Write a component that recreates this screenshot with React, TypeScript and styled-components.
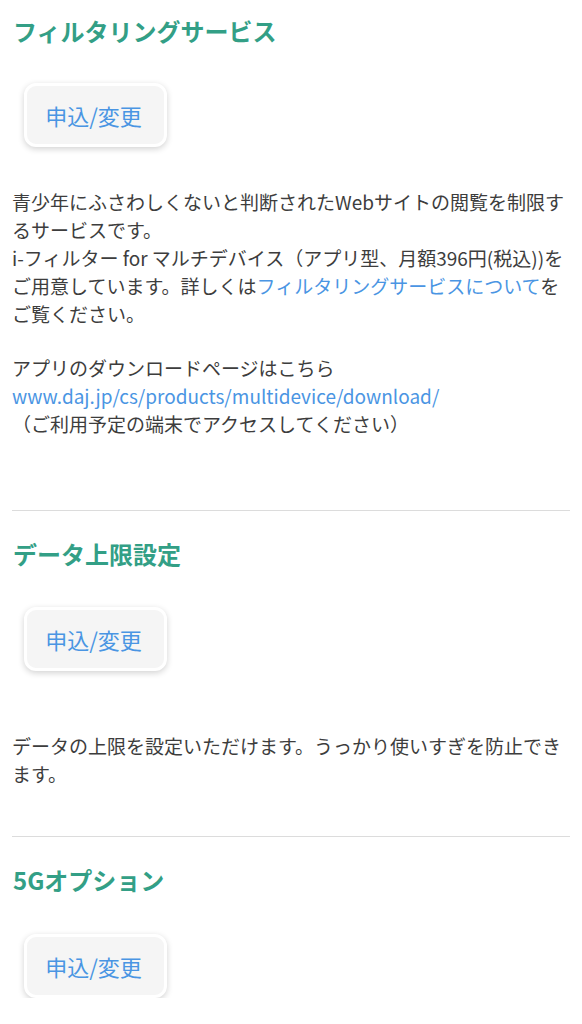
import styled, { createGlobalStyle } from 'styled-components'

const GlobalStyle = createGlobalStyle`
  html, body {
    margin: 0;
    padding: 0;
    background: #ffffff;
  }
  body {
    font-family: "Noto Sans CJK JP", "Noto Sans", sans-serif;
    color: #3a3a3a;
  }
`

const Page = styled.main`
  padding: 0 12px;
`

const Section = styled.section`
  display: flex;
  flex-direction: column;
  align-items: flex-start;
`

const Heading = styled.h2<{ $top: number }>`
  margin: ${(p) => p.$top}px 0 0 1px;
  font-size: 24px;
  line-height: 34px;
  font-weight: 700;
  color: #339f86;
`

const ActionButton = styled.button<{ $top: number }>`
  margin: ${(p) => p.$top}px 0 0 12px;
  width: 143px;
  height: 64px;
  box-sizing: border-box;
  border: 3px solid #ffffff;
  border-radius: 12px;
  background: #f5f5f5;
  box-shadow: 0 2px 6px rgba(0, 0, 0, 0.18);
  font-family: inherit;
  font-size: 22px;
  color: #4a95e3;
  padding: 0 4px 0 0;
  cursor: pointer;
`

const Body = styled.div<{ $top: number }>`
  margin-top: ${(p) => p.$top}px;
  font-size: 19px;
  line-height: 28px;
  color: #3d3d3d;
`

const Para = styled.p`
  margin: 0;
  & + & {
    margin-top: 26px;
  }
`

const Link = styled.a`
  color: #4a95e3;
  text-decoration: none;
`

const Divider = styled.hr<{ $top: number }>`
  margin: ${(p) => p.$top}px 0 0;
  border: none;
  border-top: 1px solid #dcdcdc;
  align-self: stretch;
`

const App = () => (
  <>
    <GlobalStyle />
    <Page>
      <Section>
        <Heading $top={14}>フィルタリングサービス</Heading>
        <ActionButton $top={35}>申込/変更</ActionButton>
        <Body $top={41}>
          <Para>
            青少年にふさわしくないと判断されたWebサイトの閲覧を制限するサービスです。
            <br />
            i-フィルター for マルチデバイス（アプリ型、月額396円(税込))をご用意しています。詳しくは
            <Link href="#">フィルタリングサービスについて</Link>をご覧ください。
          </Para>
          <Para>
            アプリのダウンロードページはこちら
            <br />
            <Link href="#">www.daj.jp/cs/products/multidevice/download/</Link>
            <br />
            （ご利用予定の端末でアクセスしてください）
          </Para>
        </Body>
        <Divider $top={72} />
      </Section>
      <Section>
        <Heading $top={26}>データ上限設定</Heading>
        <ActionButton $top={36}>申込/変更</ActionButton>
        <Body $top={61}>
          <Para>データの上限を設定いただけます。うっかり使いすぎを防止できます。</Para>
        </Body>
        <Divider $top={48} />
      </Section>
      <Section>
        <Heading $top={26}>5Gオプション</Heading>
        <ActionButton $top={37}>申込/変更</ActionButton>
      </Section>
    </Page>
  </>
)

export default App
